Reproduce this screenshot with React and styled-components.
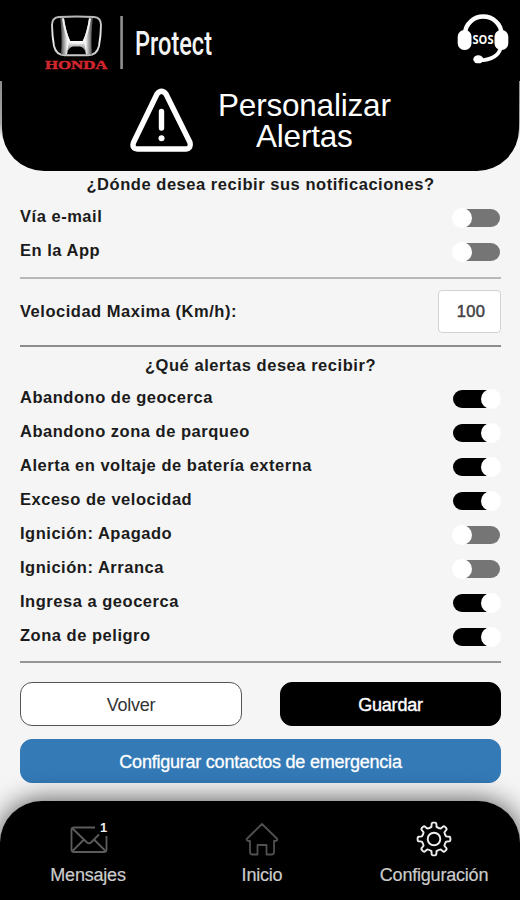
import React, { useState } from 'react';
import styled, { createGlobalStyle } from 'styled-components';

const GlobalStyle = createGlobalStyle`
  * {
    box-sizing: border-box;
  }
  body {
    margin: 0;
    background-color: #f5f5f5;
    font-family: 'Liberation Sans', Arial, sans-serif;
    color: #1b1b1b;
  }
`;

const Screen = styled.div`
  display: flex;
  flex-direction: column;
  width: 520px;
  height: 900px;
  overflow: hidden;
  background-color: #f5f5f5;
`;

const TopBar = styled.header`
  display: flex;
  justify-content: space-between;
  align-items: flex-start;
  height: 81px;
  padding: 12px 11px 0 44px;
  background-color: #000;
`;

const BannerEdge = styled.div`
  background: linear-gradient(#8c8c8c 0, #a8a8a8 42px, #f5f5f5 56px);
`;

const TitleBanner = styled.div`
  display: flex;
  gap: 23px;
  height: 90px;
  margin: 0 1px 0 2px;
  padding: 6px 0 0 127px;
  background-color: #000;
  border-radius: 0 0 42px 42px;
`;

const Title = styled.h1`
  margin: 3px 0 0;
  font-size: 31.5px;
  font-weight: 400;
  line-height: 31px;
  letter-spacing: -0.2px;
  text-align: center;
  color: #fff;
`;

const Content = styled.main`
  display: flex;
  flex-direction: column;
  padding: 0 19px 0 20px;
`;

const Question = styled.h2`
  margin: 0;
  height: 30px;
  font-size: 16.5px;
  line-height: 26px;
  letter-spacing: 0.54px;
  text-align: center;
`;

const OptionRow = styled.label`
  display: flex;
  justify-content: space-between;
  align-items: center;
  height: 34px;
  padding-right: 1px;
`;

const OptionName = styled.span`
  padding-bottom: ${(props) => (props.$centered ? 2 : 5)}px;
  font-size: 16.5px;
  font-weight: 700;
  line-height: 20px;
  letter-spacing: 0.52px;
`;

const Track = styled.button`
  display: flex;
  justify-content: ${(props) => (props.$on ? 'flex-end' : 'flex-start')};
  align-items: center;
  width: 47px;
  height: 18px;
  padding: 0;
  border: 0;
  border-radius: 9px;
  background-color: ${(props) => (props.$on ? '#000' : '#757575')};
`;

const Knob = styled.span`
  flex: none;
  width: 20px;
  height: 20px;
  margin: 0 -1px;
  border-radius: 50%;
  background-color: #fff;
`;

const Divider = styled.hr`
  width: 100%;
  height: 2px;
  margin: ${(props) => props.$margin};
  border: 0;
  background-color: ${(props) => props.$color};
`;

const SpeedRow = styled.div`
  display: flex;
  justify-content: space-between;
  align-items: center;
  height: 43px;
`;

const SpeedInput = styled.input`
  width: 63px;
  height: 43px;
  padding: 0 0 0 3px;
  border: 1px solid #d2d2d2;
  border-radius: 4px;
  background-color: #fff;
  font-family: inherit;
  font-size: 16.5px;
  letter-spacing: 0.4px;
  -webkit-text-stroke: 0.5px #444;
  text-align: center;
  color: #444;
`;

const Actions = styled.div`
  display: grid;
  grid-template-columns: 222px 221px;
  justify-content: space-between;
  row-gap: 13px;
`;

const Button = styled.button`
  grid-column: ${(props) => (props.$wide ? '1 / -1' : 'auto')};
  height: 44px;
  padding: 2px 0 0;
  border: 1px solid ${(props) => props.$border};
  border-radius: 12px;
  background-color: ${(props) => props.$background};
  color: ${(props) => props.$color};
  font-family: inherit;
  font-size: 18px;
  letter-spacing: -0.23px;
  -webkit-text-stroke: ${(props) => props.$stroke || 0}px;
`;

const NavBar = styled.nav`
  display: grid;
  grid-template-columns: 176px 172px 172px;
  height: 99px;
  margin-top: auto;
  padding-top: 19px;
  border-radius: 42px 42px 0 0;
  background-color: #000;
  box-shadow: 0 0 27px 1px rgba(0, 0, 0, 0.65);
`;

const NavItem = styled.a`
  display: flex;
  flex-direction: column;
  align-items: center;
  gap: 7px;
  font-size: 18px;
  line-height: 20px;
  letter-spacing: -0.2px;
  -webkit-text-stroke: 0.2px;
  color: #ccc;
`;

const Drawing = styled.svg`
  flex: none;
  display: block;
  overflow: visible;
`;

const Brand = () => (
  <Drawing width="172" height="60" viewBox="44 12 172 60">
    <defs>
      <linearGradient id="chrome" x1="0" y1="0" x2="0" y2="1">
        <stop offset="0" stopColor="#b8b8b8" />
        <stop offset="0.6" stopColor="#f2f2f2" />
        <stop offset="1" stopColor="#c8c8c8" />
      </linearGradient>
      <linearGradient id="legLeft" x1="0" y1="0" x2="1" y2="0">
        <stop offset="0" stopColor="#333" />
        <stop offset="0.7" stopColor="#f4f4f4" />
      </linearGradient>
      <linearGradient id="legRight" x1="0" y1="0" x2="1" y2="0">
        <stop offset="0.3" stopColor="#f4f4f4" />
        <stop offset="1" stopColor="#333" />
      </linearGradient>
      <linearGradient id="crossbar" x1="0" y1="0" x2="0" y2="1">
        <stop offset="0" stopColor="#fff" />
        <stop offset="1" stopColor="#555" />
      </linearGradient>
    </defs>
    <path
      d="M59 17 Q76.500 16 94 17 Q101 17.500 101 25 Q100.800 36 99 46 Q97 55 88 55.300 H65 Q56 55 54 46 Q52.200 36 52 25 Q52 17.500 59 17Z"
      fill="none"
      stroke="url(#chrome)"
      strokeWidth="1.9"
    />
    <path d="M60 18 H64 Q66 33 70.500 42 Q68 47 67 54.500 H61 Q62.500 36 60 18Z" fill="url(#legLeft)" />
    <path d="M93 18 H89 Q87 33 82.500 42 Q85 47 86 54.500 H92 Q90.500 36 93 18Z" fill="url(#legRight)" />
    <path d="M69 41 H84 L86 54 Q84.500 47 80 46.500 H73 Q68.500 47 67 54Z" fill="url(#crossbar)" />
    <path
      d="M63 18.500 Q65.500 34 69.200 41 Q70.200 42.800 72 42.800 H81 Q82.800 42.800 83.800 41 Q87.500 34 90 18.500"
      fill="none"
      stroke="#f5f5f5"
      strokeWidth="1.9"
    />
    <text
      x="45"
      y="68.500"
      textLength="62.500"
      lengthAdjust="spacingAndGlyphs"
      fontFamily="Liberation Serif, serif"
      fontSize="12.500"
      fontWeight="700"
      fill="#d2262e"
      stroke="#d2262e"
      strokeWidth="0.5"
    >
      HONDA
    </text>
    <rect x="120.300" y="16" width="2.600" height="53" fill="#909090" />
    <text
      x="135"
      y="55"
      textLength="77"
      lengthAdjust="spacingAndGlyphs"
      fontFamily="Roboto, sans-serif"
      fontSize="33"
      fontWeight="500"
      fill="#f4f4f4"
    >
      Protect
    </text>
  </Drawing>
);

const SosIcon = () => (
  <Drawing width="52" height="52" viewBox="457 12 52 52" fill="none" stroke="#fff">
    <path d="M465 34 V33 A18.300 17.800 0 0 1 501.500 33 V34" strokeWidth="4.400" />
    <path d="M501 47 Q498 60 479 60.300" strokeWidth="3.600" />
    <ellipse cx="478.300" cy="59.300" rx="5" ry="4" fill="#fff" stroke="none" />
    <rect x="457.700" y="30" width="13.800" height="20" rx="6.500" fill="#fff" stroke="none" />
    <rect x="494.500" y="30" width="13.800" height="20" rx="6.500" fill="#fff" stroke="none" />
    <text
      x="472.500"
      y="44.200"
      textLength="21"
      lengthAdjust="spacingAndGlyphs"
      fontFamily="Open Sans, sans-serif"
      fontSize="12"
      fontWeight="700"
      fill="#fff"
      stroke="none"
    >
      SOS
    </text>
  </Drawing>
);

const WarningIcon = () => (
  <Drawing width="66" height="66" viewBox="129 87 66 66" fill="none" stroke="#fff">
    <path
      d="M157 94 Q161.500 88.500 166 94 L190 142.500 Q191.500 148.500 186 149 H137.500 Q131.500 148.500 133.500 142.500Z"
      strokeWidth="5.400"
      strokeLinejoin="round"
    />
    <path d="M161.500 111.500 V128" strokeWidth="5.400" strokeLinecap="round" />
    <circle cx="161.500" cy="138.300" r="3" fill="#fff" stroke="none" />
  </Drawing>
);

const MailIcon = () => (
  <Drawing width="40" height="38" viewBox="68 820 40 38" fill="none" stroke="#5c5c5c" strokeWidth="1.8">
    <path d="M95 827.500 H74 Q71.500 827.500 71.500 830 V849.500 Q71.500 852 74 852 H104 Q106.500 852 106.500 849.500 V836" />
    <path d="M72.500 828.500 L87 842.500 Q89 844 91 842.500 L99 834.500 M72.500 851 L83.500 840 M105.500 851 L94.500 840" />
    <text x="100" y="832" fontFamily="Liberation Sans, sans-serif" fontSize="13" fontWeight="700" fill="#eee" stroke="none">
      1
    </text>
  </Drawing>
);

const HomeIcon = () => (
  <Drawing width="38" height="38" viewBox="243 820 38 38" fill="none" stroke="#505050" strokeWidth="1.8" strokeLinejoin="round">
    <path d="M262 824 L277.300 839 Q277.500 841 275.500 841 H274 V852 Q274 854.500 271.500 854.500 H266.500 V845 H257.500 V854.500 H252.500 Q250 854.500 250 852 V841 H248.500 Q246.500 841 246.700 839Z" />
  </Drawing>
);

// Gear outline with eight rounded teeth
const gearPath = () => {
  const point = (radius, degrees) => {
    const a = (degrees * Math.PI) / 180;
    return `${(19 + radius * Math.sin(a)).toFixed(2)} ${(19 - radius * Math.cos(a)).toFixed(2)}`;
  };
  let d = '';
  for (let i = 0; i < 8; i += 1) {
    const c = i * 45;
    d += `${i ? 'L' : 'M'}${point(12.4, c - 12)} L${point(15.6, c - 8.5)} Q${point(16.4, c - 7)} ${point(16.4, c - 4)} L${point(16.4, c + 4)} Q${point(16.4, c + 7)} ${point(15.6, c + 8.5)} L${point(12.4, c + 12)} Q${point(11.6, c + 22.5)} ${point(12.4, c + 33)}`;
  }
  return `${d}Z`;
};

const GearIcon = () => (
  <Drawing width="38" height="38" viewBox="0 0 38 38" fill="none" stroke="#eee" strokeWidth="1.9" strokeLinejoin="round">
    <path d={gearPath()} />
    <circle cx="19" cy="19" r="6.300" />
  </Drawing>
);

// Row with its name on the left and a switch on the right
const Option = (props) => {
  const { name, initial } = props;
  const [on, setOn] = useState(initial);

  return (
    <OptionRow>
      <OptionName>{name}</OptionName>
      <Track type="button" role="switch" aria-checked={on} $on={on} onClick={() => setOn(!on)}>
        <Knob />
      </Track>
    </OptionRow>
  );
};

const channels = [
  { name: 'Vía e-mail', on: false },
  { name: 'En la App', on: false },
];

const alerts = [
  { name: 'Abandono de geocerca', on: true },
  { name: 'Abandono zona de parqueo', on: true },
  { name: 'Alerta en voltaje de batería externa', on: true },
  { name: 'Exceso de velocidad', on: true },
  { name: 'Ignición: Apagado', on: false },
  { name: 'Ignición: Arranca', on: false },
  { name: 'Ingresa a geocerca', on: true },
  { name: 'Zona de peligro', on: true },
];

const App = () => (
  <>
    <GlobalStyle />
    <Screen>
      <TopBar>
        <Brand />
        <SosIcon />
      </TopBar>
      <BannerEdge>
        <TitleBanner>
          <WarningIcon />
          <Title>
            Personalizar
            <br />
            Alertas
          </Title>
        </TitleBanner>
      </BannerEdge>
      <Content>
        <Question>¿Dónde desea recibir sus notificaciones?</Question>
        {channels.map((item) => (
          <Option key={item.name} name={item.name} initial={item.on} />
        ))}
        <Divider $margin="8px 0 11px" $color="#b8b8b8" />
        <SpeedRow>
          <OptionName $centered>Velocidad Maxima (Km/h):</OptionName>
          <SpeedInput defaultValue="100" />
        </SpeedRow>
        <Divider $margin="12px 0 5px" $color="#8c8c8c" />
        <Question>¿Qué alertas desea recibir?</Question>
        {alerts.map((item) => (
          <Option key={item.name} name={item.name} initial={item.on} />
        ))}
        <Divider $margin="7px 0 19px" $color="#959595" />
        <Actions>
          <Button $background="#fff" $border="#555" $color="#333">
            Volver
          </Button>
          <Button $background="#000" $border="#000" $color="#fff" $stroke={0.4}>
            Guardar
          </Button>
          <Button $wide $background="#337ab7" $border="#337ab7" $color="#fff" $stroke={0.3}>
            Configurar contactos de emergencia
          </Button>
        </Actions>
      </Content>
      <NavBar>
        <NavItem>
          <MailIcon />
          Mensajes
        </NavItem>
        <NavItem>
          <HomeIcon />
          Inicio
        </NavItem>
        <NavItem>
          <GearIcon />
          Configuración
        </NavItem>
      </NavBar>
    </Screen>
  </>
);

export default App;
